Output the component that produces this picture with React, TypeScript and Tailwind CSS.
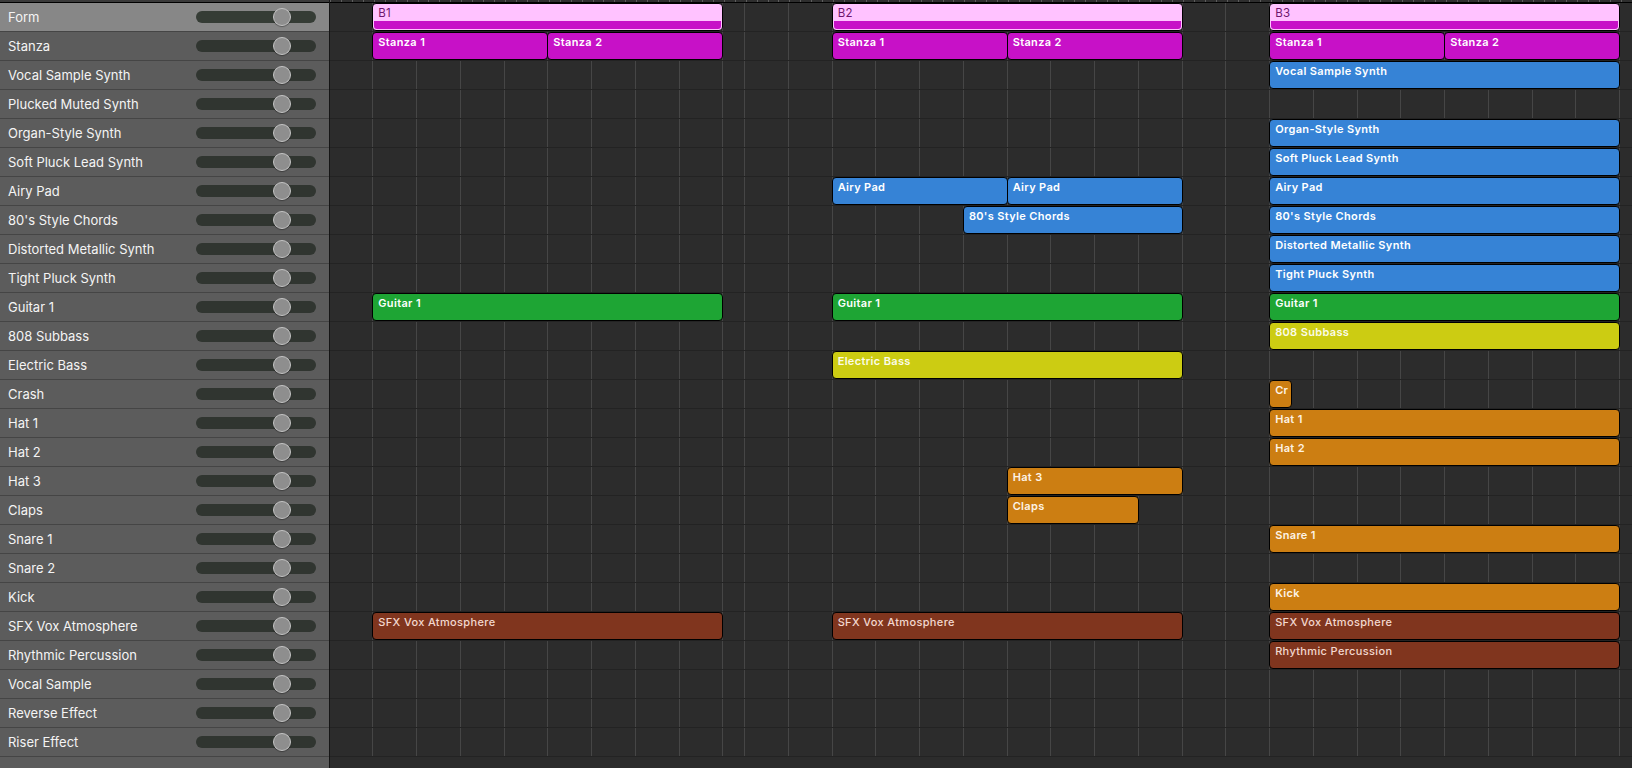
import React from "react";

type Kind = "form" | "stanza" | "blue" | "green" | "yellow" | "orange" | "brown";

type Clip = { at: number; len: number; label: string; kind: Kind };

type Lane = { name: string; clips: Clip[] };

// one beat on the timeline, in px
const U = 43.75;
const X0 = -1.5;

const B1 = 1;
const B2 = 11.5;
const B3 = 21.5;

const clip = (at: number, len: number, label: string, kind: Kind): Clip => ({ at, len, label, kind });
const full = (sec: number, label: string, kind: Kind) => clip(sec, 8, label, kind);

const lanes: Lane[] = [
  { name: "Form", clips: [full(B1, "B1", "form"), full(B2, "B2", "form"), full(B3, "B3", "form")] },
  {
    name: "Stanza",
    clips: [
      clip(B1, 4, "Stanza 1", "stanza"),
      clip(B1 + 4, 4, "Stanza 2", "stanza"),
      clip(B2, 4, "Stanza 1", "stanza"),
      clip(B2 + 4, 4, "Stanza 2", "stanza"),
      clip(B3, 4, "Stanza 1", "stanza"),
      clip(B3 + 4, 4, "Stanza 2", "stanza"),
    ],
  },
  { name: "Vocal Sample Synth", clips: [full(B3, "Vocal Sample Synth", "blue")] },
  { name: "Plucked Muted Synth", clips: [] },
  { name: "Organ-Style Synth", clips: [full(B3, "Organ-Style Synth", "blue")] },
  { name: "Soft Pluck Lead Synth", clips: [full(B3, "Soft Pluck Lead Synth", "blue")] },
  {
    name: "Airy Pad",
    clips: [clip(B2, 4, "Airy Pad", "blue"), clip(B2 + 4, 4, "Airy Pad", "blue"), full(B3, "Airy Pad", "blue")],
  },
  { name: "80's Style Chords", clips: [clip(B2 + 3, 5, "80's Style Chords", "blue"), full(B3, "80's Style Chords", "blue")] },
  { name: "Distorted Metallic Synth", clips: [full(B3, "Distorted Metallic Synth", "blue")] },
  { name: "Tight Pluck Synth", clips: [full(B3, "Tight Pluck Synth", "blue")] },
  { name: "Guitar 1", clips: [full(B1, "Guitar 1", "green"), full(B2, "Guitar 1", "green"), full(B3, "Guitar 1", "green")] },
  { name: "808 Subbass", clips: [full(B3, "808 Subbass", "yellow")] },
  { name: "Electric Bass", clips: [full(B2, "Electric Bass", "yellow")] },
  { name: "Crash", clips: [clip(B3, 0.5, "Cr", "orange")] },
  { name: "Hat 1", clips: [full(B3, "Hat 1", "orange")] },
  { name: "Hat 2", clips: [full(B3, "Hat 2", "orange")] },
  { name: "Hat 3", clips: [clip(B2 + 4, 4, "Hat 3", "orange")] },
  { name: "Claps", clips: [clip(B2 + 4, 3, "Claps", "orange")] },
  { name: "Snare 1", clips: [full(B3, "Snare 1", "orange")] },
  { name: "Snare 2", clips: [] },
  { name: "Kick", clips: [full(B3, "Kick", "orange")] },
  {
    name: "SFX Vox Atmosphere",
    clips: [full(B1, "SFX Vox Atmosphere", "brown"), full(B2, "SFX Vox Atmosphere", "brown"), full(B3, "SFX Vox Atmosphere", "brown")],
  },
  { name: "Rhythmic Percussion", clips: [full(B3, "Rhythmic Percussion", "brown")] },
  { name: "Vocal Sample", clips: [] },
  { name: "Reverse Effect", clips: [] },
  { name: "Riser Effect", clips: [] },
];

const kindClass: Record<Exclude<Kind, "form">, string> = {
  stanza: "bg-[#c711c7] text-white font-semibold",
  blue: "bg-[#3683d6] text-white font-semibold",
  green: "bg-[#1ea534] text-white font-semibold",
  yellow: "bg-[#cccc12] text-[#fbfbe8] font-semibold",
  orange: "bg-[#cc7e12] text-[#fdf3e6] font-semibold",
  brown: "bg-[#80351e] text-[#f3d8cf] font-medium",
};

// beat lines: section B1 runs on its own grid, the rest is offset by half a beat
const gridLines = [
  ...Array.from({ length: 9 }, (_, i) => 1 + i),
  ...Array.from({ length: 21 }, (_, i) => 9.5 + i),
];

function Slider({ active }: { active: boolean }) {
  return (
    <div className={`relative h-[12px] w-[120px] rounded-full ${active ? "bg-[#353c35]" : "bg-[#303530]"}`}>
      <div className="absolute left-[77px] top-1/2 h-[18px] w-[18px] -translate-y-1/2 rounded-full border border-[#c4c4c4] bg-[#8e8e8e] shadow-[0_1px_1px_rgba(0,0,0,0.35)]" />
    </div>
  );
}

function TrackHeader({ name, active }: { name: string; active: boolean }) {
  return (
    <div
      className={`flex h-[29px] shrink-0 items-center justify-between border-b border-[#454545] pl-2 pr-[13px] ${
        active ? "bg-[#878787]" : "bg-[#5c5c5c]"
      }`}
    >
      <span className="mt-px text-[13px] text-[#f4f4f4]">{name}</span>
      <Slider active={active} />
    </div>
  );
}

function Region({ c }: { c: Clip }) {
  const style = { left: X0 + c.at * U, width: c.len * U + 1 };
  if (c.kind === "form") {
    return (
      <div
        style={style}
        className="absolute top-0 flex h-[28px] flex-col overflow-hidden rounded-[4px] border border-black bg-[#ffc2ff]"
      >
        <div className="flex-1 px-[5px] pt-[2px] text-[11.5px] leading-[14px] tracking-[0.3px] text-[#6e166e]">{c.label}</div>
        <div className="mx-px mb-px h-[8px] rounded-b-[3px] bg-[#c711c7]" />
      </div>
    );
  }
  return (
    <div
      style={style}
      className={`absolute top-0 h-[28px] overflow-hidden whitespace-nowrap rounded-[4px] border border-black px-[5px] pt-[2px] text-[11px] leading-[14px] tracking-[0.35px] ${
        kindClass[c.kind]
      }`}
    >
      {c.label}
    </div>
  );
}

export default function App() {
  return (
    <div className="flex h-screen w-full overflow-hidden bg-[#2c2c2c] font-['Inter','Noto_Sans',sans-serif] antialiased">
      <aside className="flex w-[330px] shrink-0 flex-col border-r border-[#151515] bg-[#5c5c5c]">
        <div className="h-[3px] shrink-0 border-b border-black bg-[#3a3a3a]" />
        {lanes.map((lane, i) => (
          <TrackHeader key={lane.name} name={lane.name} active={i === 0} />
        ))}
      </aside>

      <main className="relative flex-1">
        <div className="h-[3px] border-b border-black bg-[#2e2e2e] bg-[repeating-linear-gradient(90deg,#5e5e5e_0_1px,transparent_1px_10.9375px)]" />
        <div className="relative">
          {gridLines.map((u) => (
            <div key={u} style={{ left: X0 + u * U }} className="absolute top-0 bottom-0 w-px bg-[#464646]" />
          ))}
          {lanes.map((lane) => (
            <div key={lane.name} className="relative h-[29px] border-b border-[#232323]">
              {lane.clips.map((c, j) => (
                <Region key={j} c={c} />
              ))}
            </div>
          ))}
        </div>
      </main>
    </div>
  );
}
